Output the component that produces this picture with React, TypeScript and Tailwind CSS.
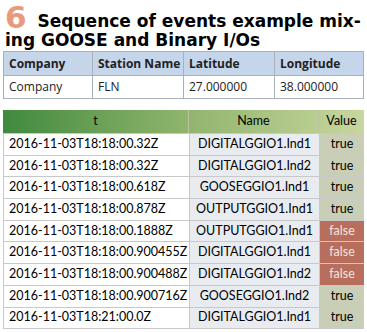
import React from "react";

const rows: [string, string, boolean][] = [
  ["2016-11-03T18:18:00.32Z", "DIGITALGGIO1.Ind1", true],
  ["2016-11-03T18:18:00.32Z", "DIGITALGGIO1.Ind2", true],
  ["2016-11-03T18:18:00.618Z", "GOOSEGGIO1.Ind1", true],
  ["2016-11-03T18:18:00.878Z", "OUTPUTGGIO1.Ind1", true],
  ["2016-11-03T18:18:00.1888Z", "OUTPUTGGIO1.Ind1", false],
  ["2016-11-03T18:18:00.900455Z", "DIGITALGGIO1.Ind1", false],
  ["2016-11-03T18:18:00.900488Z", "DIGITALGGIO1.Ind2", false],
  ["2016-11-03T18:18:00.900716Z", "GOOSEGGIO1.Ind2", true],
  ["2016-11-03T18:21:00.0Z", "DIGITALGGIO1.Ind1", true],
];

export default function App() {
  return (
    <div className="w-[367px] h-[332px] bg-white overflow-hidden">
      <div className="pl-[5px] pt-[8px] text-black font-bold text-[17px] leading-[19px]" style={{ fontFamily: "'DejaVu Sans', sans-serif" }}>
        <span className="inline-block text-[#e89a80] text-[31px] leading-[19px] mr-[11px] align-[-1px]">6</span>
        Sequence of events example mix-ing GOOSE and Binary I/Os
      </div>
      <div className="mx-[3px] mt-[1px] border border-[#a8b0bc] text-[12px] whitespace-nowrap" style={{ fontFamily: "'Open Sans', sans-serif" }}>
        <div className="grid grid-cols-[89px_91px_91px_1fr] bg-[#c5d5ea] h-[23px] font-bold text-[#222]">
          <div className="px-[5px] flex items-center border-r border-[#a8b0bc]">Company</div>
          <div className="px-[5px] flex items-center border-r border-[#a8b0bc]">Station Name</div>
          <div className="px-[5px] flex items-center border-r border-[#a8b0bc]">Latitude</div>
          <div className="px-[5px] flex items-center">Longitude</div>
        </div>
        <div className="grid grid-cols-[89px_91px_91px_1fr] h-[23px] border-t border-[#a8b0bc] text-[#222]">
          <div className="px-[5px] flex items-center border-r border-[#a8b0bc]">Company</div>
          <div className="px-[5px] flex items-center border-r border-[#a8b0bc]">FLN</div>
          <div className="px-[5px] flex items-center border-r border-[#a8b0bc]">27.000000</div>
          <div className="px-[5px] flex items-center">38.000000</div>
        </div>
      </div>
      <div className="mx-[3px] mt-[11px] text-[12.5px] text-black whitespace-nowrap" style={{ fontFamily: "Lato, sans-serif" }}>
        <div className="grid grid-cols-[185px_130px_1fr] h-[23px] bg-gradient-to-r from-[#3f8a3f] via-[#8fb46c] to-[#c9d69f]">
          <div className="flex items-center justify-center">t</div>
          <div className="flex items-center justify-center border-l border-[#b8c4a0]">Name</div>
          <div className="flex items-center justify-center border-l border-[#b8c4a0]">Value</div>
        </div>
        <div className="border-l border-[#c8c8c8] border-b">
          {rows.map(([t, n, v], i) => (
            <div key={i} className="grid grid-cols-[185px_130px_1fr] h-[21.7px] border-t border-[#c8c8c8]">
              <div className="flex items-center pl-[5px]">{t}</div>
              <div className="flex items-center justify-center bg-[#e8ecf1] border-l border-[#c8c8c8]">{n}</div>
              <div className={`flex items-center justify-center border-l border-[#c8c8c8] ${v ? "bg-[#c8cfb6]" : "bg-[#b76e5c] text-[#f4e4de]"}`}>{v ? "true" : "false"}</div>
            </div>
          ))}
        </div>
      </div>
    </div>
  );
}
